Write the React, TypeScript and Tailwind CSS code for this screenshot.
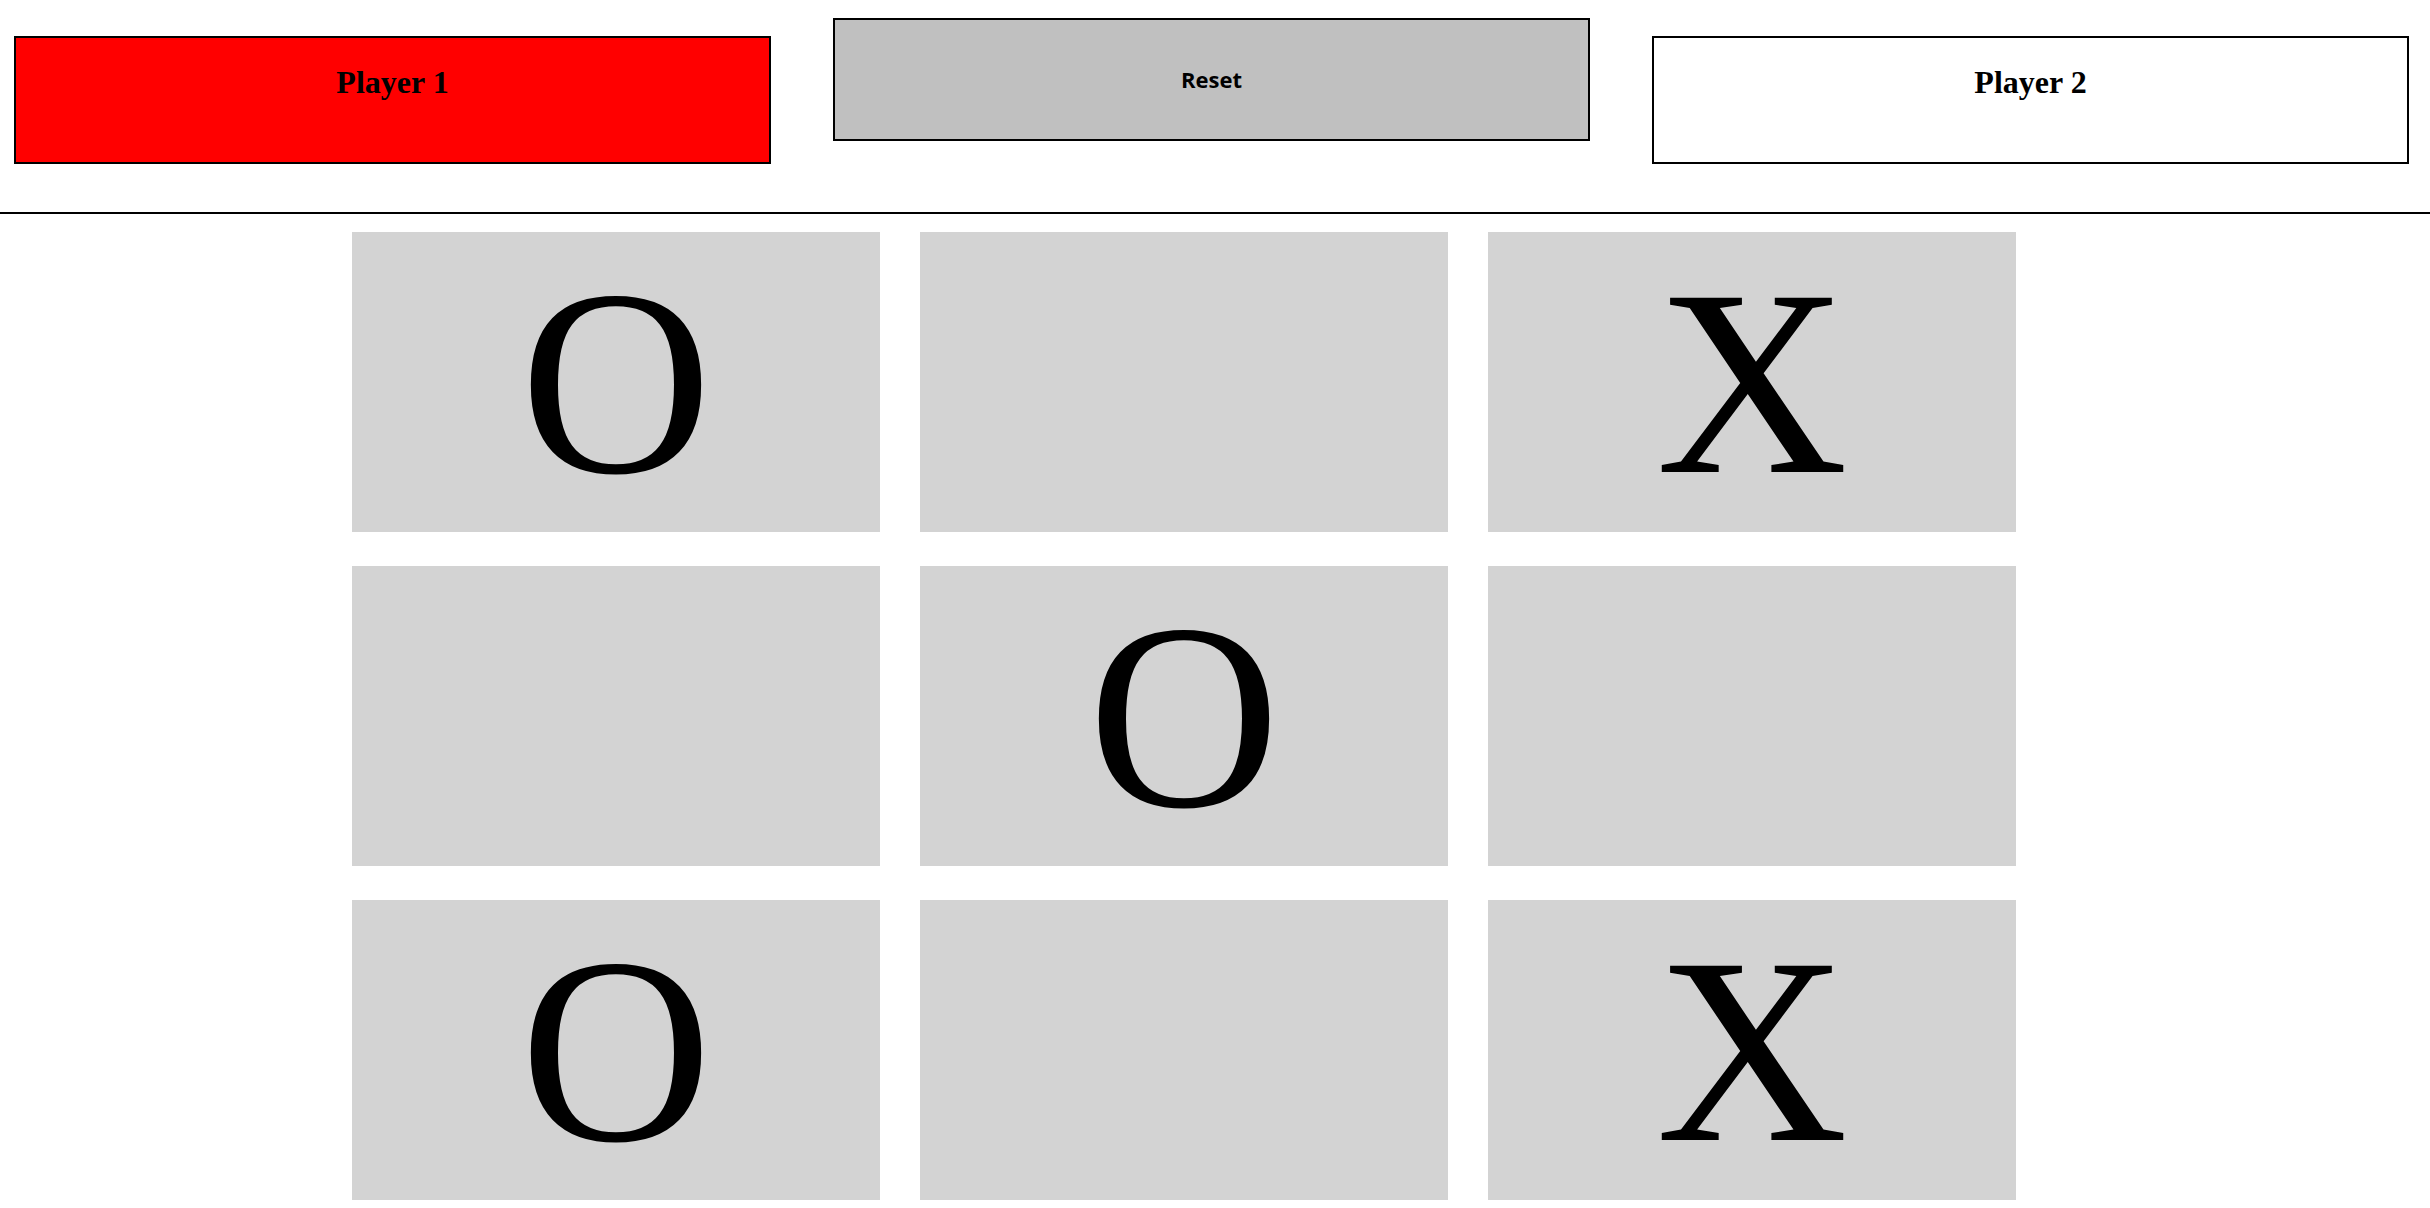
import React, { useState } from 'react';

type Mark = 'X' | 'O' | '';

export default function App() {
  const [board, setBoard] = useState<Mark[]>(['O', '', 'X', '', 'O', '', 'O', '', 'X']);
  const [turn, setTurn] = useState<'X' | 'O'>('X');

  const play = (i: number) => {
    if (board[i]) return;
    const next = [...board];
    next[i] = turn;
    setBoard(next);
    setTurn(turn === 'X' ? 'O' : 'X');
  };

  return (
    <div className="min-h-screen bg-white text-black">
      {/* Header with players and reset */}
      <div className="flex items-start h-[214px] border-b-2 border-black pl-[14px] pr-[21px] gap-[62px]">
        <div className="flex-1 mt-[36px] h-[128px] border-2 border-black bg-[#ff0000] text-center">
          <h1 className="mt-[20px] text-[32px] leading-normal font-bold font-['Liberation_Serif',serif]">Player 1</h1>
        </div>
        <button
          onClick={() => {
            setBoard(['', '', '', '', '', '', '', '', '']);
            setTurn('X');
          }}
          className="flex-1 mt-[18px] h-[123px] border-2 border-black bg-[#c0c0c0] text-[22px] font-bold font-['Open_Sans',sans-serif]"
        >
          Reset
        </button>
        <div className="flex-1 mt-[36px] h-[128px] border-2 border-black bg-white text-center">
          <h1 className="mt-[20px] text-[32px] leading-normal font-bold font-['Liberation_Serif',serif]">Player 2</h1>
        </div>
      </div>

      {/* Board */}
      <div className="ml-[352px] mt-[18px] w-[1664px] grid grid-cols-3 gap-x-[40px] gap-y-[34px]">
        {board.map((cell, i) => (
          <div
            key={i}
            onClick={() => play(i)}
            className="h-[300px] bg-[#d3d3d3] flex items-center justify-center text-[266px] leading-normal font-['Liberation_Serif',serif]"
          >
            {cell}
          </div>
        ))}
      </div>
    </div>
  );
}
